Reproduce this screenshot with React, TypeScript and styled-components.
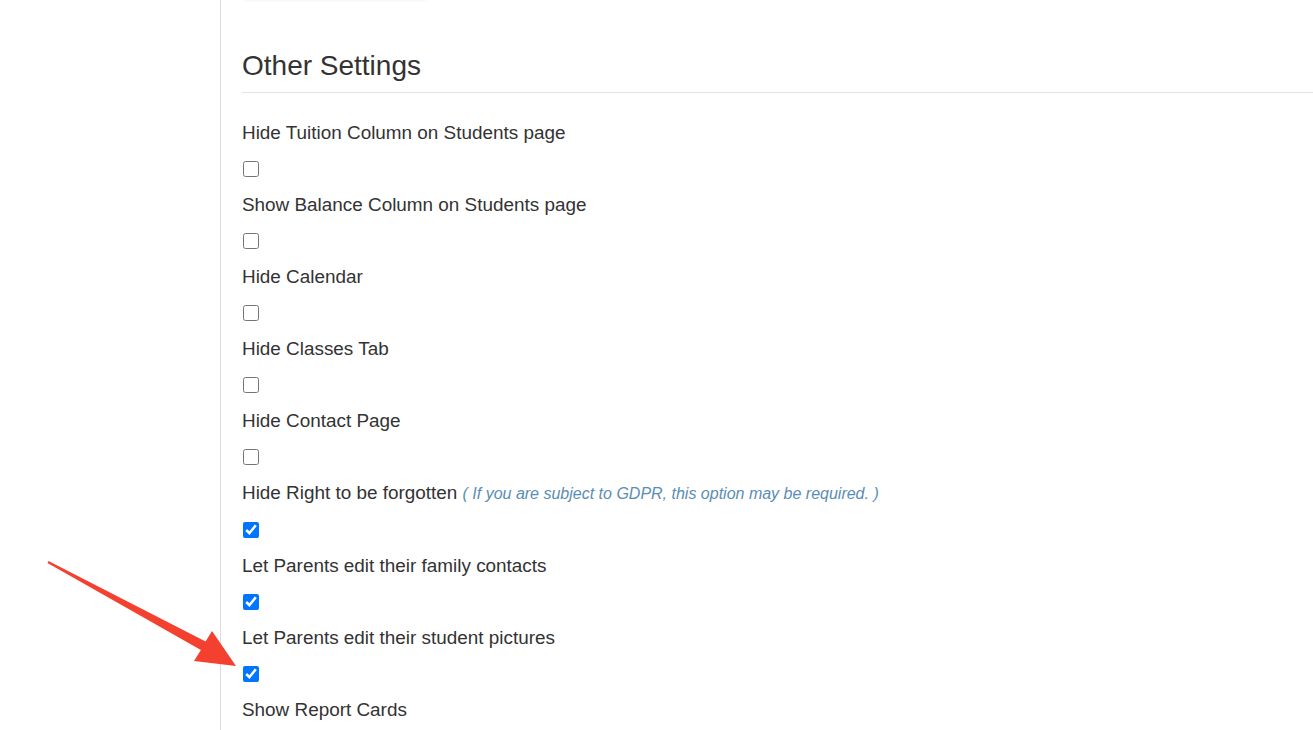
import React from "react";
import styled, { createGlobalStyle } from "styled-components";

const GlobalStyle = createGlobalStyle`
  html, body {
    margin: 0;
    padding: 0;
    background: #fff;
    font-family: "Liberation Sans", Arial, sans-serif;
    color: #333;
  }
`;

const Page = styled.div`
  position: relative;
  display: flex;
  min-height: 730px;
  overflow: hidden;
`;

const Sidebar = styled.aside`
  width: 220px;
  flex-shrink: 0;
  border-right: 1px solid #dcdcdc;
`;

const Main = styled.main`
  flex: 1;
  padding-left: 21px;
`;

const CroppedButton = styled.div`
  width: 184px;
  height: 40px;
  margin-top: -41px;
  margin-left: 1px;
  border-radius: 4px;
  background: #fff;
  box-shadow: 0 1px 3px rgba(0, 0, 0, 0.09);
`;

const Heading = styled.h3`
  margin: 50px 0 0;
  font-size: 28px;
  font-weight: 400;
  line-height: 1.2;
  color: #333;
`;

const Rule = styled.hr`
  margin: 9px 0 26px;
  border: 0;
  border-top: 1px solid #e3e3e3;
`;

const Setting = styled.div`
  display: flex;
  flex-direction: column;
  align-items: flex-start;
`;

const Label = styled.label`
  display: block;
  font-size: 18.9px;
  line-height: 27px;
  color: #333;
`;

const Note = styled.em`
  font-size: 16px;
  color: #5a8db5;
`;

const Check = styled.input.attrs({ type: "checkbox" })`
  width: 16px;
  height: 16px;
  margin: 15px 0 14.1px 1px;
  accent-color: #0075ff;
`;

const Arrow = styled.svg`
  position: absolute;
  left: 0;
  top: 0;
  pointer-events: none;
`;

type Item = { label: string; note?: string; checked: boolean };

const items: Item[] = [
  { label: "Hide Tuition Column on Students page", checked: false },
  { label: "Show Balance Column on Students page", checked: false },
  { label: "Hide Calendar", checked: false },
  { label: "Hide Classes Tab", checked: false },
  { label: "Hide Contact Page", checked: false },
  {
    label: "Hide Right to be forgotten",
    note: "( If you are subject to GDPR, this option may be required. )",
    checked: true,
  },
  { label: "Let Parents edit their family contacts", checked: true },
  { label: "Let Parents edit their student pictures", checked: true },
  { label: "Show Report Cards", checked: false },
];

const App: React.FC = () => {
  return (
    <>
      <GlobalStyle />
      <Page>
        <Sidebar />
        <Main>
          <CroppedButton />
          <Heading>Other Settings</Heading>
          <Rule />
          {items.map((item, i) => (
            <Setting key={i}>
              <Label htmlFor={`opt-${i}`}>
                {item.label} {item.note && <Note>{item.note}</Note>}
              </Label>
              <Check id={`opt-${i}`} defaultChecked={item.checked} />
            </Setting>
          ))}
        </Main>
        <Arrow width="1313" height="730" viewBox="0 0 1313 730">
          <polygon
            points="48.5,561 205.6,641.5 212,631 236,666 194,661 200.9,650.1 47.5,563"
            fill="#f4402f"
          />
        </Arrow>
      </Page>
    </>
  );
};

export default App;
